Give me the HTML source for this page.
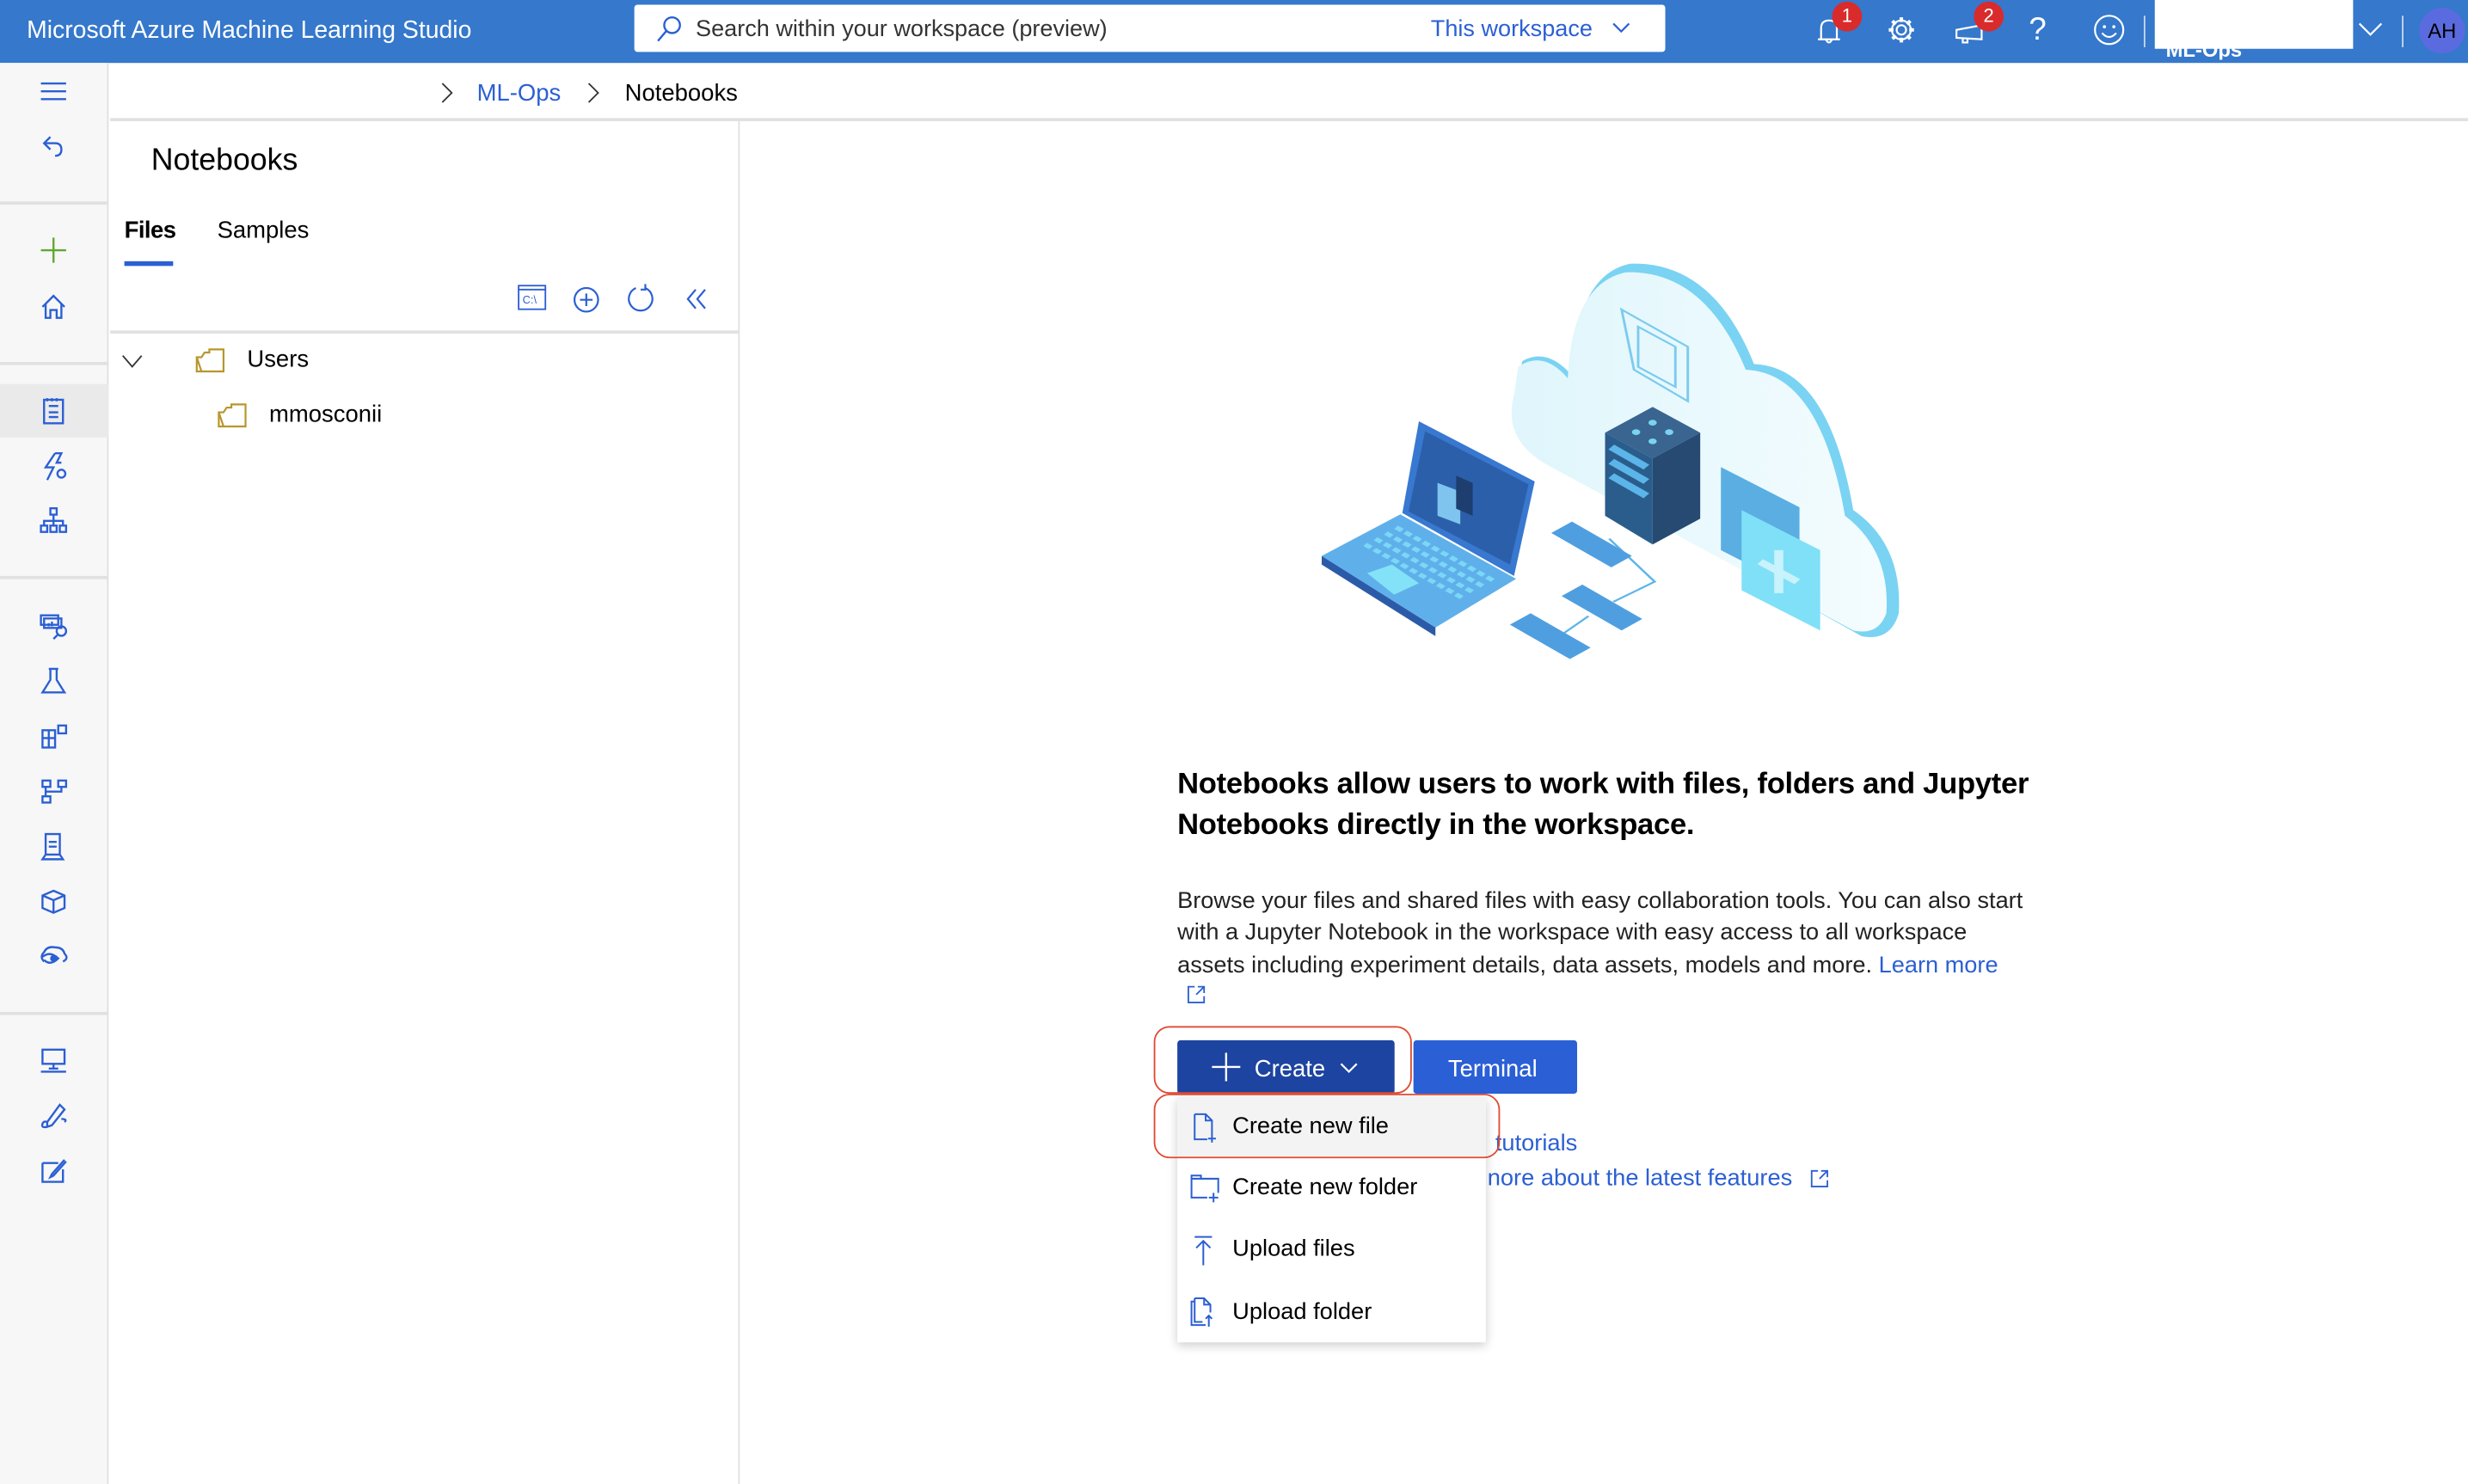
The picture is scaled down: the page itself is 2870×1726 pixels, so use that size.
<!DOCTYPE html>
<html><head><meta charset="utf-8">
<style>
*{box-sizing:border-box;margin:0;padding:0}
html,body{width:2870px;height:1726px;overflow:hidden;background:#fff}
#w{position:absolute;left:0;top:0;width:1568px;height:943px;transform:scale(1.83036);transform-origin:0 0;font-family:"Liberation Sans",sans-serif;color:#000}
.a{position:absolute}
.nw{white-space:nowrap}
svg{overflow:visible}
.ic{position:absolute;left:24px;width:20px;height:20px}
.ic *{fill:none;stroke:#2b5fd4;stroke-width:1.3}
</style></head><body><div id="w">
<!-- header -->
<div class="a" style="left:0;top:0;width:1568px;height:40px;background:#3578cc"></div>
<div class="a nw" style="left:17px;top:11px;color:#fff;font-size:15.5px;">Microsoft Azure Machine Learning Studio</div>
<div class="a" style="left:403px;top:3px;width:655px;height:30px;background:#fff;border-radius:2px"></div>
<svg class="a" style="left:416px;top:9px" width="18" height="18"><circle cx="11" cy="7" r="5" fill="none" stroke="#2b5fd4" stroke-width="1.3"/><path d="M7.5 10.5 L2 17" stroke="#2b5fd4" stroke-width="1.3"/></svg>
<div class="a nw" style="left:442px;top:11px;font-size:14.8px;color:#333">Search within your workspace (preview)</div>
<div class="a nw" style="left:909px;top:11px;font-size:14.8px;color:#2b5fd4">This workspace</div>
<svg class="a" style="left:1024px;top:14px" width="12" height="8"><path d="M1 1 L6 6 L11 1" fill="none" stroke="#2b5fd4" stroke-width="1.2"/></svg>
<!-- header icons -->
<svg class="a" style="left:1153px;top:10px" width="20" height="20"><path d="M4 15 L4 8 Q4 3 9 3 Q14 3 14 8 L14 15 Z M2 15 H16 M7 15 Q9 19 11 15" fill="none" stroke="#fff" stroke-width="1.2"/></svg>
<div class="a" style="left:1164px;top:1px;width:19px;height:19px;border-radius:50%;background:#d92b2b;color:#fff;font-size:12px;text-align:center;line-height:19px">1</div>
<svg class="a" style="left:1198px;top:9px" width="20" height="20"><circle cx="10" cy="10" r="3" fill="none" stroke="#fff" stroke-width="1.2"/><path d="M10 2 L10 5 M10 15 L10 18 M2 10 L5 10 M15 10 L18 10 M4.3 4.3 L6.4 6.4 M13.6 13.6 L15.7 15.7 M4.3 15.7 L6.4 13.6 M13.6 6.4 L15.7 4.3" stroke="#fff" stroke-width="2.2"/><circle cx="10" cy="10" r="6" fill="none" stroke="#fff" stroke-width="1.2"/></svg>
<svg class="a" style="left:1241px;top:10px" width="22" height="20"><path d="M2 9 L2 14 L18 15 L18 6 Z M6 14 L6 17 L9 17 L9 14" fill="none" stroke="#fff" stroke-width="1.2"/></svg>
<div class="a" style="left:1254px;top:1px;width:19px;height:19px;border-radius:50%;background:#d92b2b;color:#fff;font-size:12px;text-align:center;line-height:19px">2</div>
<div class="a" style="left:1289px;top:8px;color:#fff;font-size:20px;font-weight:300">?</div>
<svg class="a" style="left:1330px;top:9px" width="22" height="22"><circle cx="10" cy="10" r="9" fill="none" stroke="#fff" stroke-width="1.2"/><circle cx="7" cy="8" r="1" fill="#fff"/><circle cx="13" cy="8" r="1" fill="#fff"/><path d="M5.5 12 Q10 17 14.5 12" fill="none" stroke="#fff" stroke-width="1.2"/></svg>
<div class="a" style="left:1362px;top:10px;width:1px;height:20px;background:#c8d8f0"></div>
<div class="a" style="left:1369px;top:0;width:126px;height:31px;background:#fff"></div>
<div class="a nw" style="left:1376px;top:28px;height:10px;overflow:hidden;color:#fff;font-size:13px;font-weight:bold;line-height:8px">ML-Ops</div>
<svg class="a" style="left:1498px;top:14px" width="16" height="10"><path d="M1 1 L8 8 L15 1" fill="none" stroke="#fff" stroke-width="1.2"/></svg>
<div class="a" style="left:1526px;top:10px;width:1px;height:20px;background:#c8d8f0"></div>
<div class="a" style="left:1537px;top:5px;width:29px;height:29px;border-radius:50%;background:#5a6be0;font-size:13px;text-align:center;line-height:29px">AH</div>

<!-- left nav -->
<div class="a" style="left:0;top:40px;width:69px;height:903px;background:#f7f7f7;border-right:1px solid #e1e1e1"></div>
<div class="a" style="left:0;top:128px;width:69px;height:2px;background:#e1e1e1"></div>
<div class="a" style="left:0;top:230px;width:69px;height:2px;background:#e1e1e1"></div>
<div class="a" style="left:0;top:244px;width:69px;height:34px;background:#eaeaea"></div>
<div class="a" style="left:0;top:366px;width:69px;height:2px;background:#e1e1e1"></div>
<div class="a" style="left:0;top:643px;width:69px;height:2px;background:#e1e1e1"></div>
<svg class="ic" style="top:48px"><path d="M2 5 H18 M2 10 H18 M2 15 H18"/></svg>
<svg class="ic" style="top:83px"><path d="M8 4 L4 8 L8 12 M4 8 H11 Q15 8 15 12 Q15 16 11 16"/></svg>
<svg class="ic" style="top:149px"><path d="M10 2 V18 M2 10 H18" style="stroke:#5ea832"/></svg>
<svg class="ic" style="top:185px"><path d="M3 10 L10 3 L17 10 M5 8 V17 H8 V12 H12 V17 H15 V8"/></svg>
<svg class="ic" style="top:251px"><path d="M4 3 H16 V18 H4 Z M7 7 H13 M7 11 H13 M7 14 H13 M6 2 V4 M9 2 V4 M12 2 V4"/></svg>
<svg class="ic" style="top:286px"><path d="M11 2 L5 11 H10 L6 19 M11 2 H15 L12 8 H15"/><circle cx="15" cy="15" r="2.5"/></svg>
<svg class="ic" style="top:321px"><path d="M8 2 H12 V6 H8 Z M2 13 H6 V17 H2 Z M8 13 H12 V17 H8 Z M14 13 H18 V17 H14 Z M10 6 V13 M4 13 V10 H16 V13"/></svg>
<svg class="ic" style="top:387px"><path d="M2 4 H13 V10 H2 Z M4 6 H15 V12 H4 Z M7 9 V11 M9 8 V11"/><circle cx="15" cy="14" r="3"/><path d="M13 16 L10 19"/></svg>
<svg class="ic" style="top:423px"><path d="M7 2 H13 M8 2 V9 L3 17 H17 L12 9 V2"/></svg>
<svg class="ic" style="top:458px"><path d="M3 6 H11 V17 H3 Z M3 11 H11 M7 6 V17 M13 3 H18 V8 H13 Z"/></svg>
<svg class="ic" style="top:493px"><path d="M3 3 H8 V7 H3 Z M13 3 H18 V7 H13 Z M3 13 H8 V17 H3 Z M5 7 V13 M5 10 H15 V7"/></svg>
<svg class="ic" style="top:528px"><path d="M5 2 H14 V15 H5 Z M7 7 H12 M7 10 H12 M3 18 H16 L14 15 H5 Z"/></svg>
<svg class="ic" style="top:563px"><path d="M10 3 L17 6 V14 L10 17 L3 14 V6 Z M3 6 L10 9 L17 6 M10 9 V17"/></svg>
<svg class="ic" style="top:598px"><path d="M4 13 Q1 10 4 7 Q6 3 11 4 Q16 4 17 8 Q20 11 16 13 M3 10 Q8 6 13 11 Q8 16 4 12"/><circle cx="10" cy="11" r="1.5" style="fill:#2b5fd4"/></svg>
<svg class="ic" style="top:664px"><path d="M3 3 H17 V12 H3 Z M10 12 V15 M7 15 H13 M2 17 H18"/></svg>
<svg class="ic" style="top:699px"><path d="M14 3 L17 6 L9 16 L6 17 L6 14 Z M6 17 Q2 18 3 15 Q4 13 6 14 M15 12 Q19 12 17 14"/></svg>
<svg class="ic" style="top:734px"><path d="M3 5 H13 M3 5 V17 H16 V9 M17 3 L9 12 L8 14 L10 13 L18 4"/></svg>

<!-- breadcrumb -->
<div class="a" style="left:70px;top:75px;width:1498px;height:2px;background:#e1e1e1"></div>
<svg class="a" style="left:280px;top:52px" width="8" height="14"><path d="M1 1 L7 7 L1 13" fill="none" stroke="#333" stroke-width="1"/></svg>
<div class="a nw" style="left:303px;top:51px;font-size:15px;color:#2b5fd4">ML-Ops</div>
<svg class="a" style="left:373px;top:52px" width="8" height="14"><path d="M1 1 L7 7 L1 13" fill="none" stroke="#333" stroke-width="1"/></svg>
<div class="a nw" style="left:397px;top:51px;font-size:15px">Notebooks</div>

<!-- file panel -->
<div class="a" style="left:469px;top:77px;width:1px;height:866px;background:#e1e1e1"></div>
<div class="a nw" style="left:96px;top:91px;font-size:19.5px">Notebooks</div>
<div class="a nw" style="left:79px;top:138px;font-size:15px;font-weight:bold;letter-spacing:-0.3px">Files</div>
<div class="a" style="left:79px;top:166px;width:31px;height:3px;background:#2b5fd4"></div>
<div class="a nw" style="left:138px;top:138px;font-size:15px">Samples</div>
<svg class="a" style="left:329px;top:181px" width="18" height="16"><rect x="0.5" y="0.5" width="17" height="15" fill="none" stroke="#2b5fd4"/><path d="M0 3 H18" stroke="#2b5fd4"/><text x="3" y="12" font-size="7" fill="#2b5fd4" font-family="Liberation Sans">C:\</text></svg>
<svg class="a" style="left:364px;top:182px" width="17" height="17"><circle cx="8.5" cy="8.5" r="7.5" fill="none" stroke="#2b5fd4" stroke-width="1.2"/><path d="M8.5 4.5 V12.5 M4.5 8.5 H12.5" stroke="#2b5fd4" stroke-width="1.2"/></svg>
<svg class="a" style="left:398px;top:180px" width="18" height="20"><path d="M6 3 A7.5 7.5 0 1 0 12 3 M12 0.5 V4 H9" fill="none" stroke="#2b5fd4" stroke-width="1.2"/></svg>
<svg class="a" style="left:435px;top:183px" width="16" height="14"><path d="M7 1 L2 7 L7 13 M13 1 L8 7 L13 13" fill="none" stroke="#2b5fd4" stroke-width="1.2"/></svg>
<div class="a" style="left:70px;top:210px;width:399px;height:2px;background:#e1e1e1"></div>
<svg class="a" style="left:77px;top:225px" width="14" height="10"><path d="M1 1 L7 8 L13 1" fill="none" stroke="#333" stroke-width="1"/></svg>
<svg class="a" style="left:124px;top:221px" width="20" height="16"><path d="M1 6 H4 L6 3 H9 V1 H18 V15 H1 Z M1 6 L4 15" fill="none" stroke="#b8962e" stroke-width="1.2"/></svg>
<div class="a nw" style="left:157px;top:220px;font-size:15px">Users</div>
<svg class="a" style="left:138px;top:256px" width="20" height="16"><path d="M1 6 H4 L6 3 H9 V1 H18 V15 H1 Z M1 6 L4 15" fill="none" stroke="#b8962e" stroke-width="1.2"/></svg>
<div class="a nw" style="left:171px;top:255px;font-size:15px">mmosconii</div>

<!-- illustration -->
<svg class="a" style="left:820px;top:153px" width="410" height="284" viewBox="0 0 1560 1560" preserveAspectRatio="none">
<defs><linearGradient id="cl" x1="0" x2="1"><stop offset="0" stop-color="#dff6fc"/><stop offset="1" stop-color="#f4fcfe"/></linearGradient></defs>
<path d="M560 420 Q620 370 680 470 Q690 120 820 80 Q1020 70 1120 430 Q1300 440 1360 940 Q1480 1060 1470 1300 Q1450 1400 1380 1380 L640 780 Q520 700 540 540 Z" fill="#7ad3f2"/>
<path d="M550 440 Q610 380 670 480 Q680 150 810 110 Q1000 100 1100 450 Q1280 460 1340 960 Q1450 1080 1440 1300 Q1420 1380 1360 1360 L630 790 Q510 700 540 540 Z" fill="url(#cl)"/>
<path d="M800 240 L960 370 V560 L830 450 Z M840 300 L930 370 V510 L840 440 Z" fill="none" stroke="#7ccbef" stroke-width="6"/>
<path d="M760 670 L875 580 L990 670 L875 760 Z" fill="#3a6590"/>
<path d="M760 670 L875 760 V1060 L760 960 Z" fill="#2a5d8c"/>
<path d="M875 760 L990 670 V970 L875 1060 Z" fill="#264a72"/>
<g fill="#7ad3f2"><circle cx="875" cy="635" r="10"/><circle cx="835" cy="668" r="10"/><circle cx="915" cy="668" r="10"/><circle cx="875" cy="700" r="10"/></g>
<path d="M775 720 L860 790 M775 770 L860 840 M775 820 L860 890" stroke="#5bb5e8" stroke-width="22"/>
<path d="M1040 790 L1230 930 V1220 L1040 1080 Z" fill="#5aaee2"/>
<path d="M1090 940 L1280 1080 V1360 L1090 1220 Z" fill="#80e0f8"/>
<path d="M1180 1080 V1230 M1135 1120 L1225 1190" stroke="#c8f2fc" stroke-width="22"/>
<path d="M770 1040 L880 1190 L780 1260 M720 1310 L660 1370" fill="none" stroke="#5bb5e8" stroke-width="6"/>
<path d="M630 1020 L680 980 L825 1100 L775 1140 Z M655 1240 L705 1200 L850 1320 L800 1360 Z M530 1340 L580 1300 L725 1420 L675 1460 Z" fill="#4f9fe0"/>
<path d="M310 630 L590 840 L540 1170 L270 950 Z" fill="#3878d0"/>
<path d="M325 665 L575 850 L530 1130 L285 945 Z" fill="#2c5faa"/>
<path d="M355 845 L410 875 V990 L355 960 Z" fill="#7fc4ef"/>
<path d="M400 820 L440 845 V960 L400 935 Z" fill="#1e3e70"/>
<path d="M75 1100 L265 955 L545 1180 L350 1350 Z" fill="#5fb0ea"/>
<path d="M75 1100 L350 1350 V1380 L75 1130 Z" fill="#2b5ba8"/>
<g stroke="#7ad8f6" stroke-width="14" stroke-dasharray="18 10"><path d="M180 1060 L420 1250"/><path d="M205 1040 L445 1230"/><path d="M230 1020 L470 1210"/><path d="M255 1000 L495 1190"/></g>
<path d="M185 1160 L245 1130 L310 1195 L250 1235 Z" fill="#84e2f8"/>
</svg>

<!-- text -->
<div class="a nw" style="left:748px;top:486px;font-size:18.9px;font-weight:bold;letter-spacing:-0.15px;line-height:26px">Notebooks allow users to work with files, folders and Jupyter<br>Notebooks directly in the workspace.</div>
<div class="a nw" style="left:748px;top:563px;font-size:14.85px;line-height:20.3px;color:#222">Browse your files and shared files with easy collaboration tools. You can also start<br>with a Jupyter Notebook in the workspace with easy access to all workspace<br>assets including experiment details, data assets, models and more. <span style="color:#2b5fd4">Learn more</span></div>
<svg class="a" style="left:754px;top:626px" width="12" height="12"><path d="M5 1 H1 V11 H11 V7 M7 1 H11 V5 M11 1 L6 6" fill="none" stroke="#2b5fd4" stroke-width="1"/></svg>

<!-- buttons -->
<div class="a" style="left:748px;top:661px;width:138px;height:34px;background:#1d44a0;border-radius:2px"></div>
<svg class="a" style="left:770px;top:669px" width="18" height="18"><path d="M9 0 V18 M0 9 H18" stroke="#fff" stroke-width="1.3"/></svg>
<div class="a nw" style="left:797px;top:671px;color:#fff;font-size:15px">Create</div>
<svg class="a" style="left:851px;top:675px" width="12" height="8"><path d="M1 1 L6 6 L11 1" fill="none" stroke="#fff" stroke-width="1.2"/></svg>
<div class="a" style="left:733px;top:652px;width:164px;height:43px;border:1.5px solid #e04a33;border-radius:10px"></div>
<div class="a" style="left:898px;top:661px;width:104px;height:34px;background:#2a5fd6;border-radius:2px"></div>
<div class="a nw" style="left:920px;top:671px;color:#fff;font-size:15px">Terminal</div>

<!-- behind links -->
<div class="a nw" style="left:950px;top:719px;font-size:14.9px;color:#2b5fd4">tutorials</div>
<div class="a nw" style="left:945px;top:741px;font-size:14.9px;color:#2b5fd4">nore about the latest features</div>
<svg class="a" style="left:1150px;top:743px" width="12" height="12"><path d="M5 1 H1 V11 H11 V7 M7 1 H11 V5 M11 1 L6 6" fill="none" stroke="#2b5fd4" stroke-width="1"/></svg>

<!-- dropdown -->
<div class="a" style="left:748px;top:697px;width:196px;height:156px;background:#fff;box-shadow:0 2px 6px rgba(0,0,0,0.2)"></div>
<div class="a" style="left:748px;top:697px;width:196px;height:38px;background:#f3f3f3"></div>
<div class="a" style="left:733px;top:695px;width:220px;height:41px;border:1.5px solid #e04a33;border-radius:10px"></div>
<svg class="a" style="left:758px;top:707px" width="16" height="19"><path d="M1 1 H8 L12 5 V14 M9 17 H1 V1 M8 1 V5 H12 M12 14 V19 M9.5 16.5 H14.5" fill="none" stroke="#2b5fd4" stroke-width="1.1"/></svg>
<div class="a nw" style="left:783px;top:708px;font-size:14.9px">Create new file</div>
<svg class="a" style="left:756px;top:746px" width="20" height="19"><path d="M1 3 H7 V1 H1 V15 H11 M1 3 V15 M7 3 H18 V12 M15 12 V18 M12 15 H18" fill="none" stroke="#2b5fd4" stroke-width="1.1"/></svg>
<div class="a nw" style="left:783px;top:747px;font-size:14.9px">Create new folder</div>
<svg class="a" style="left:758px;top:785px" width="14" height="20"><path d="M1 1 H12 M6.5 4 V19 M2 8 L6.5 3.5 L11 8" fill="none" stroke="#2b5fd4" stroke-width="1.1"/></svg>
<div class="a nw" style="left:783px;top:786px;font-size:14.9px">Upload files</div>
<svg class="a" style="left:756px;top:824px" width="18" height="20"><path d="M3 3 H1 V18 H10 M3 1 H9 L13 5 V10 M3 1 V16 H8 M9 1 V5 H13 M12 12 V19 M10 14 L12 12 L14 14" fill="none" stroke="#2b5fd4" stroke-width="1.1"/></svg>
<div class="a nw" style="left:783px;top:826px;font-size:14.9px">Upload folder</div>
</div></body></html>
